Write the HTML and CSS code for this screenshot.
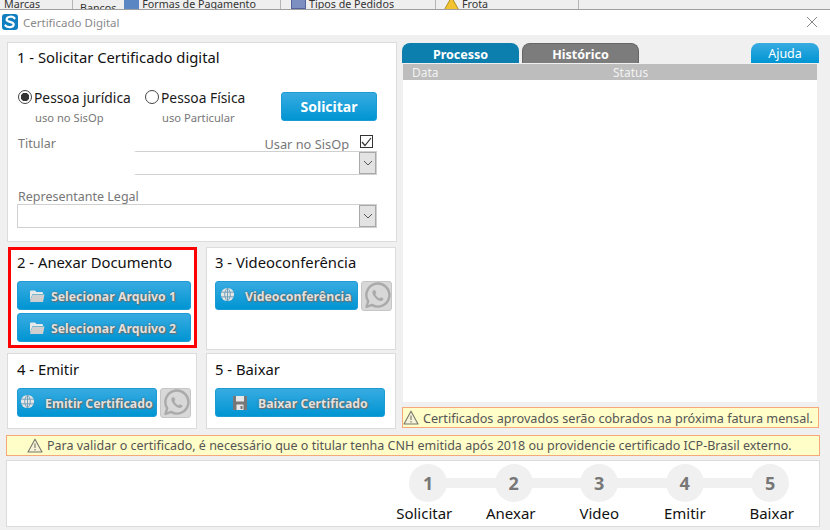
FILE: index.html
```html
<!DOCTYPE html>
<html lang="pt-BR">
<head>
<meta charset="utf-8">
<title>Certificado Digital</title>
<link rel="stylesheet" href="styles.css">
</head>
<body>
<svg class="defs" width="0" height="0" aria-hidden="true">
  <defs>
    <symbol id="i-folder" viewBox="0 0 16 14"><path d="M1 4V2.500Q1 1.500 2 1.500H6L7.500 3H13Q14 3 14 4V5H3.500L1 12Z" fill="#e8e8e8"/><path d="M3.500 5.500H15.500L14 13H1Z" fill="#cfcfcf"/></symbol>
    <symbol id="i-globe" viewBox="0 0 16 16"><circle cx="8" cy="8" r="7" fill="#e6e6e6"/><path d="M1 5.500H15M1 10.500H15M8 1V15M8 1C4 5 4 11 8 15M8 1C12 5 12 11 8 15" fill="none" stroke="#6d9db8" stroke-width="1"/></symbol>
    <symbol id="i-save" viewBox="0 0 14 14"><path d="M0 0H14V14H0Z" fill="#777"/><path d="M3 0H11V5.500H3Z" fill="#e8e8e8"/><path d="M3.500 8.500H10.500V14H3.500Z" fill="#e8e8e8"/><path d="M7.500 10H9.500V13H7.500Z" fill="#777"/></symbol>
    <symbol id="i-whats" viewBox="0 0 28 28"><path d="M3.500 25L5.200 19.200A11.500 11.500 0 1 1 9 22.900Z" fill="none" stroke="#aaa" stroke-width="2.400" stroke-linejoin="round"/><path d="M10.200 8.200C8.800 9.500 9 12 11.500 15S16.800 19.500 18.800 18.800C20 18.400 20.600 17.400 20.500 16.600L17.800 15.200L16.500 16.400C15 16 13 14 12.300 12.300L13.400 11L12.200 8.200Z" fill="#aaa"/></symbol>
    <symbol id="i-warn" viewBox="0 0 16 15"><path d="M8 1.200L15 14H1Z" fill="#f6f3d8" stroke="#77786a" stroke-width="1.100" stroke-linejoin="round"/><path d="M8 5.500V10M8 11V12.400" stroke="#77786a" stroke-width="1.100"/></symbol>
    <symbol id="i-chev" viewBox="0 0 10 6"><path d="M1 1L5 5L9 1" fill="none" stroke="#555" stroke-width="1"/></symbol>
  </defs>
</svg>

<div class="appbar">
  <div class="apptab apptab-a"><span>Marcas</span></div>
  <div class="apptab apptab-b"><span class="low">Bancos</span><i class="appicon appicon-pay"></i><span>Formas de Pagamento</span></div>
  <div class="apptab apptab-c"><i class="appicon appicon-grid"></i><span>Tipos de Pedidos</span></div>
  <div class="apptab apptab-d"><svg class="appwarn" viewBox="0 0 16 15"><path d="M8 1L15.500 14.500H.5Z" fill="#f2c230" stroke="#a98a20"/></svg><span>Frota</span></div>
</div>

<div class="window">
  <header class="titlebar">
    <svg class="logo" width="16" height="16" viewBox="0 0 16 16"><rect width="16" height="16" rx="3" fill="#0f7fc0"/><path d="M12.500 4.300C10.500 1.800 5 2.300 4.600 5.300C4.200 8.600 12 7.200 11.700 10.700C11.400 13.600 5.600 14 3.400 11.500" fill="none" stroke="#fff" stroke-width="2.200" stroke-linecap="round"/></svg>
    <span class="wintitle">Certificado Digital</span>
    <svg class="close" width="12" height="12" viewBox="0 0 12 12"><path d="M1 1L11 11M11 1L1 11" stroke="#8a8a8a" stroke-width="1"/></svg>
  </header>

  <main class="content">
    <div class="columns">
      <section class="left">
        <div class="panel panel-1">
          <h2 class="ptitle">1 - Solicitar Certificado digital</h2>
          <div class="person">
            <div class="opt opt-j">
              <div class="radio-line"><span class="radio on"></span><span class="rlabel">Pessoa jurídica</span></div>
              <div class="rsub">uso no SisOp</div>
            </div>
            <div class="opt opt-f">
              <div class="radio-line"><span class="radio"></span><span class="rlabel">Pessoa Física</span></div>
              <div class="rsub">uso Particular</div>
            </div>
            <button class="btn btn-solicitar">Solicitar</button>
          </div>
          <div class="field-head head-1">
            <span class="flabel">Titular</span>
            <span class="flabel use">Usar no SisOp</span>
            <span class="check"><svg width="11" height="10" viewBox="0 0 11 10"><path d="M1 5L4 8.500L10 1" fill="none" stroke="#333" stroke-width="1.200"/></svg></span>
          </div>
          <div class="select"><span class="blur"></span><span class="sbtn"><svg width="10" height="6"><use href="#i-chev"/></svg></span></div>
          <div class="field-head head-2"><span class="flabel">Representante Legal</span></div>
          <div class="select"><span class="sbtn"><svg width="10" height="6"><use href="#i-chev"/></svg></span></div>
        </div>

        <div class="cards">
          <div class="panel card card-2">
            <h2 class="ptitle">2 - Anexar Documento</h2>
            <button class="btn btn-act btn-file"><svg class="bi" width="16" height="14"><use href="#i-folder"/></svg><span>Selecionar Arquivo 1</span></button>
            <button class="btn btn-act btn-file"><svg class="bi" width="16" height="14"><use href="#i-folder"/></svg><span>Selecionar Arquivo 2</span></button>
          </div>
          <div class="panel card card-3">
            <h2 class="ptitle">3 - Videoconferência</h2>
            <div class="btn-row">
              <button class="btn btn-act btn-video"><svg class="bi globe" width="15" height="15"><use href="#i-globe"/></svg><span>Videoconferência</span></button>
              <span class="wa"><svg width="28" height="28"><use href="#i-whats"/></svg></span>
            </div>
          </div>
          <div class="panel card card-4">
            <h2 class="ptitle">4 - Emitir</h2>
            <div class="btn-row">
              <button class="btn btn-act btn-emit"><svg class="bi globe" width="15" height="15"><use href="#i-globe"/></svg><span>Emitir Certificado</span></button>
              <span class="wa"><svg width="28" height="28"><use href="#i-whats"/></svg></span>
            </div>
          </div>
          <div class="panel card card-5">
            <h2 class="ptitle">5 - Baixar</h2>
            <button class="btn btn-act btn-down"><svg class="bi" width="14" height="14"><use href="#i-save"/></svg><span>Baixar Certificado</span></button>
          </div>
        </div>
      </section>

      <section class="right">
        <div class="tabs">
          <div class="tab tab-p">Processo</div>
          <div class="tab tab-h">Histórico</div>
          <div class="tab tab-a">Ajuda</div>
        </div>
        <div class="table">
          <div class="thead"><span class="th-data">Data</span><span>Status</span></div>
        </div>
        <div class="warn warn-small"><svg width="16" height="15"><use href="#i-warn"/></svg><span>Certificados aprovados serão cobrados na próxima fatura mensal.</span></div>
      </section>
    </div>

    <div class="warn warn-wide"><svg width="16" height="15"><use href="#i-warn"/></svg><span>Para validar o certificado, é necessário que o titular tenha CNH emitida após 2018 ou providencie certificado ICP-Brasil externo.</span></div>

    <div class="stepper">
      <div class="step"><span class="num">1</span><span class="slabel">Solicitar</span></div>
      <div class="step"><span class="num">2</span><span class="slabel">Anexar</span></div>
      <div class="step"><span class="num">3</span><span class="slabel">Video</span></div>
      <div class="step"><span class="num">4</span><span class="slabel">Emitir</span></div>
      <div class="step"><span class="num">5</span><span class="slabel">Baixar</span></div>
    </div>
  </main>
</div>
</body>
</html>
```
FILE: styles.css
```css
* { box-sizing: border-box; }
html, body { margin: 0; padding: 0; }
body {
  width: 830px;
  height: 530px;
  overflow: hidden;
  background: #f0f0f0;
  font-family: "Noto Sans", "Open Sans", sans-serif;
  color: #111;
}
.defs { position: absolute; }

/* application strip behind the dialog */
.appbar {
  display: flex;
  height: 9px;
  overflow: hidden;
  background: #efefef;
  font-size: 10.700px;
  color: #333;
  line-height: 14px;
}
.apptab { display: flex; height: 9px; align-items: flex-start; border-right: 1px solid #b5b5b5; }
.apptab span { display: block; margin-top: -3px; white-space: nowrap; }
.apptab .low { margin-top: 1px; }
.apptab-a { width: 73px; padding-left: 4px; }
.apptab-b { width: 208px; padding-left: 7px; }
.apptab-c { width: 155px; padding-left: 10px; }
.apptab-d { width: 143px; padding-left: 8px; }
.appicon { display: block; flex: none; width: 15px; height: 10px; margin: -1px 3px 0 8px; }
.appicon-pay { background: #5b86c4; }
.appicon-grid { margin-left: 0; background: #7d8fc0; border: 1px solid #55639a; }
.appwarn { width: 15px; height: 14px; margin: -4px 3px 0 0; }

/* dialog */
.window {
  height: 521px;
  background: #f0f0f0;
  border-top: 1px solid #9f9f9f;
}
.titlebar {
  display: flex;
  align-items: center;
  height: 25px;
  padding: 0 12px 1px 2px;
  background: #fff;
}
.logo { flex: none; }
.wintitle { margin-left: 5px; font-size: 11.500px; color: #8a8a8a; }
.close { margin-left: auto; }

.content { padding: 7px 10px 0 6px; }
.columns { display: flex; gap: 5px; height: 387px; }
.left { width: 391px; padding-left: 1px; }
.right { width: 417px; display: flex; flex-direction: column; }

.panel { background: #fff; border: 1px solid #dcdcdc; }
.panel-1 { height: 200px; padding: 4px 19px 0 9px; }
.ptitle { margin: 0; font-size: 14.800px; font-weight: 400; line-height: 20px; color: #111; }

.person { display: flex; height: 43px; margin-top: 20px; }
.opt-j { width: 127px; }
.opt-f { width: 137px; }
.radio-line { display: flex; align-items: center; height: 20px; }
.radio {
  flex: none;
  width: 14px;
  height: 14px;
  margin: 0 2px 0 1px;
  border: 1px solid #444;
  border-radius: 50%;
  background: #fff;
}
.radio.on { background: radial-gradient(circle, #333 0 4px, #fff 4.500px); }
.rlabel { font-size: 13.800px; color: #1a1a1a; white-space: nowrap; }
.rsub { margin: 3px 0 0 18px; font-size: 11.200px; line-height: 16px; color: #777; }

.btn {
  display: flex;
  align-items: center;
  padding: 0;
  border: 1px solid #1c9bd4;
  border-radius: 3px;
  background: linear-gradient(#38abe1, #0095d3);
  font-family: inherit;
  font-weight: 700;
  color: #fff;
  white-space: nowrap;
}
.btn-solicitar {
  justify-content: center;
  width: 96px;
  height: 29px;
  margin-top: 5px;
  font-size: 14px;
}

.field-head { display: flex; align-items: center; height: 14px; }
.head-1 { margin-top: 7px; padding: 0 4px 0 1px; }
.head-2 { margin-top: 15px; padding-left: 1px; }
.flabel { font-size: 12.500px; line-height: 14px; color: #777; }
.use { margin-left: auto; font-size: 12.800px; }
.check {
  display: flex;
  align-items: center;
  justify-content: center;
  width: 13px;
  height: 13px;
  margin: -5px 0 0 11px;
  border: 1px solid #333;
  background: #fff;
}
.select {
  position: relative;
  display: flex;
  justify-content: flex-end;
  height: 24px;
  border: 1px solid #d0d0d0;
  background: #fff;
}
.blur {
  position: absolute;
  left: -2px;
  top: -1px;
  width: 118px;
  height: 24px;
  background: #fff;
  box-shadow: 0 0 3px 1px #fff;
}
.sbtn {
  display: flex;
  align-items: center;
  justify-content: center;
  width: 17px;
  height: 22px;
  background: #e3e3e3;
  border: 1px solid #a8a8a8;
}

.cards {
  display: grid;
  grid-template-columns: 190px 190px;
  grid-template-rows: 103px 76px;
  column-gap: 9px;
  row-gap: 3px;
  margin-top: 5px;
}
.card { padding: 4px 0 0 8px; }
.card-2 {
  height: 101px;
  width: 189px;
  margin-left: 1px;
  border: 3px solid #f00;
  padding: 2px 0 0 6px;
}
.card-4, .card-5 { padding-top: 5px; }
.card-4 { padding-left: 9px; }
.btn-row { display: flex; gap: 3px; align-items: flex-start; }
.btn-act {
  height: 29px;
  padding-top: 2px;
  font-size: 12.300px;
  color: #e2e2e2;
  text-shadow: 0 0 2px #555, 1px 1px 1px #777;
}
.card .ptitle { margin-bottom: 9px; }
.btn-file { width: 174px; margin-bottom: 3px; padding-left: 11px; }
.btn-file .bi { margin: -2px 6px 0 0; }
.btn-video { width: 143px; padding-left: 4px; }
.btn-video .bi { margin: -5px 10px 0 0; }
.btn-emit { width: 140px; padding-left: 2px; }
.btn-emit .bi { margin: -5px 10px 0 0; }
.btn-down { width: 170px; padding-left: 17px; }
.btn-down .bi { margin: -2px 11px 0 0; }
.bi { flex: none; }
.wa {
  display: flex;
  align-items: center;
  justify-content: center;
  width: 31px;
  height: 30px;
  border: 1px solid #c6c6c6;
  border-radius: 3px;
  background: #d8d8d8;
}

.tabs { display: flex; height: 21px; margin-top: 1px; gap: 3px; }
.tab {
  display: flex;
  align-items: center;
  justify-content: center;
  width: 117px;
  height: 20px;
  padding-top: 3px;
  border-radius: 8px 8px 0 0;
  font-size: 12.500px;
  font-weight: 700;
  color: #fff;
}
.tab-p { background: #0c7fae; }
.tab-h { background: #7c7c7c; border: 1px solid #666; border-bottom: 0; padding-top: 1px; }
.tab-a {
  width: 68px;
  margin-left: auto;
  padding-top: 1px;
  background: linear-gradient(#38abe1, #0095d3);
  font-weight: 400;
}
.table {
  width: 414px;
  margin-left: 1px;
  height: 338px;
  background: #fff;
}
.thead {
  display: flex;
  height: 16px;
  padding: 1px 0 0 9px;
  background: #bdbdbd;
  font-size: 12px;
  line-height: 16px;
  color: #f2f2f2;
}
.th-data { width: 201px; }

.warn {
  display: flex;
  align-items: center;
  background: #fffdc8;
  border: 1px solid #f5a87a;
  color: #555;
  white-space: nowrap;
}
.warn-small {
  width: 417px;
  height: 21px;
  margin-top: 5px;
  padding-left: 0;
  gap: 4px;
  font-size: 12.650px;
}
.warn-wide {
  width: 814px;
  height: 21px;
  margin-top: 6px;
  padding-left: 20px;
  gap: 4px;
  font-size: 12.500px;
}

.stepper {
  display: grid;
  grid-template-columns: repeat(5, 85.500px);
  justify-content: end;
  width: 814px;
  height: 67px;
  margin-top: 4px;
  padding: 3px 6px 0 0;
  background: #fff;
  border: 1px solid #dcdcdc;
}
.step {
  position: relative;
  display: flex;
  flex-direction: column;
  align-items: center;
}
.step + .step::before {
  content: "";
  position: absolute;
  left: -50%;
  top: 14px;
  width: 100%;
  height: 10px;
  background: #f0f0f0;
}
.num {
  position: relative;
  z-index: 1;
  display: flex;
  align-items: center;
  justify-content: center;
  width: 38px;
  height: 38px;
  border-radius: 50%;
  background: #f0f0f0;
  font-size: 18px;
  font-weight: 700;
  color: #777;
}
.slabel { margin-top: 1px; font-size: 15px; line-height: 20px; color: #111; }
.step:nth-child(1) .slabel { margin-right: 8px; }
.step:nth-child(2) .slabel { margin-right: 6px; }
.step:nth-child(5) .slabel { margin-left: 3px; }
```
